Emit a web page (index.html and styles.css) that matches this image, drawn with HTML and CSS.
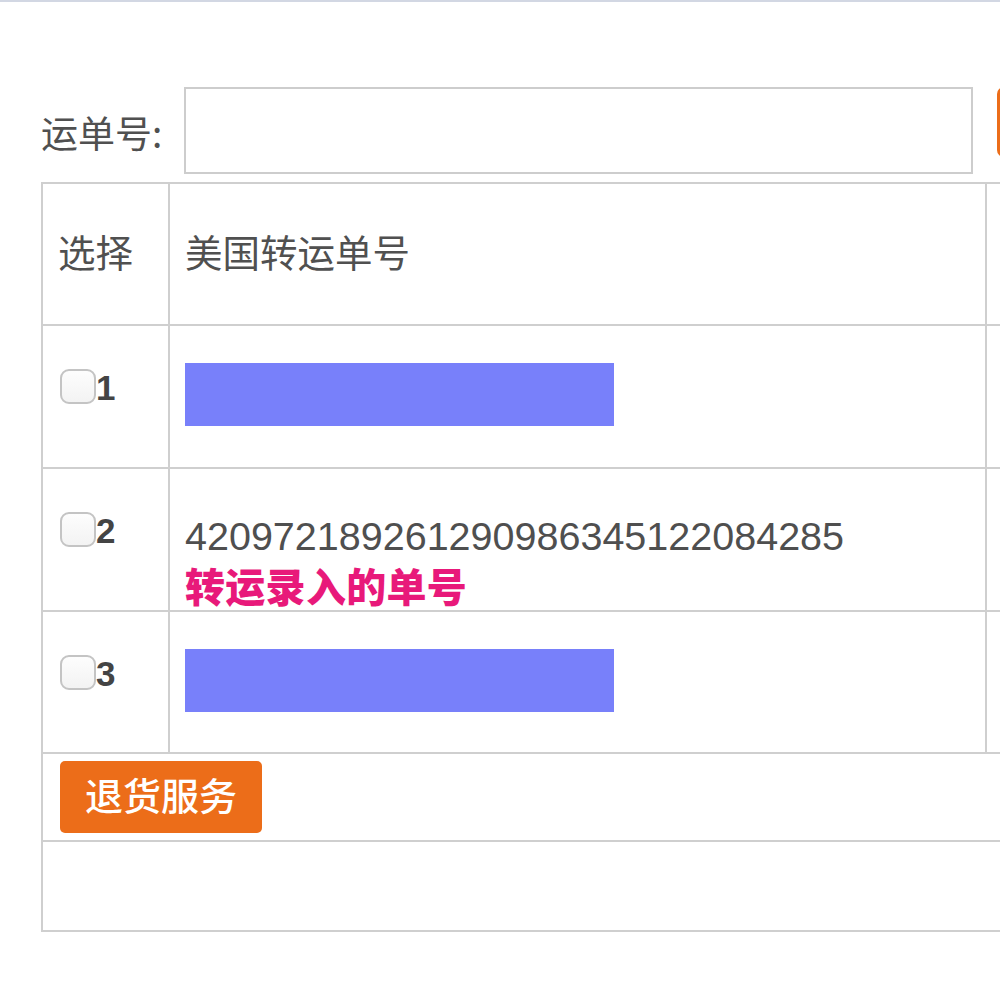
FILE: index.html
```html
<!DOCTYPE html>
<html lang="zh-CN">
<head>
<meta charset="utf-8">
<title>退货服务</title>
<link rel="stylesheet" href="styles.css">
</head>
<body>
<div class="page">
  <form class="search">
    <label class="search-label">运单号:</label>
    <input class="search-input" type="text">
    <button class="search-btn" type="button"></button>
  </form>
  <table class="grid">
    <colgroup>
      <col class="c-sel">
      <col class="c-no">
      <col class="c-extra">
    </colgroup>
    <tr class="head">
      <th>选择</th>
      <th>美国转运单号</th>
      <th></th>
    </tr>
    <tr class="row">
      <td class="sel"><span class="cb"></span><span class="idx">1</span></td>
      <td class="no"><div class="mask"></div></td>
      <td></td>
    </tr>
    <tr class="row">
      <td class="sel"><span class="cb"></span><span class="idx">2</span></td>
      <td class="no"><div class="num">420972189261290986345122084285</div><div class="note">转运录入的单号</div></td>
      <td></td>
    </tr>
    <tr class="row">
      <td class="sel"><span class="cb"></span><span class="idx">3</span></td>
      <td class="no"><div class="mask"></div></td>
      <td></td>
    </tr>
    <tr class="actions">
      <td colspan="3"><button class="return-btn" type="button">退货服务</button></td>
    </tr>
    <tr class="empty">
      <td colspan="3"></td>
    </tr>
  </table>
</div>
</body>
</html>
```
FILE: styles.css
```css
html, body {
  margin: 0;
  padding: 0;
}
body {
  width: 1000px;
  height: 1000px;
  overflow: hidden;
  background: #fff;
  border-top: 2px solid #d2d7e3;
  box-sizing: border-box;
  font-family: "Liberation Sans", "Noto Sans CJK SC", sans-serif;
  color: #505050;
}
.page {
  padding: 85px 0 0 41px;
}
.search {
  display: flex;
  align-items: center;
  margin: 0;
  width: 1200px;
}
.search-label {
  font-family: "Noto Sans CJK SC", sans-serif;
  font-size: 37px;
  width: 143px;
  flex: none;
  color: #505050;
  position: relative;
  top: 1px;
}
.search-input {
  flex: none;
  width: 789px;
  height: 87px;
  box-sizing: border-box;
  border: 2px solid #cdcdcd;
  margin: 0;
  padding: 0 10px;
  outline: none;
  background: #fff;
}
.search-btn {
  flex: none;
  align-self: flex-start;
  margin-left: 24px;
  width: 130px;
  height: 70px;
  border: none;
  border-radius: 7px;
  background: #ec6d19;
}
.grid {
  margin-top: 8px;
  border-collapse: collapse;
  table-layout: fixed;
  width: 1100px;
}
.c-sel { width: 127px; }
.c-no { width: 817px; }
.c-extra { width: 156px; }
.grid th, .grid td {
  border: 2px solid #cfcfcf;
  padding: 0 0 0 15px;
  text-align: left;
  vertical-align: top;
}
.head th {
  height: 142px;
  vertical-align: middle;
  padding-bottom: 8px;
  box-sizing: border-box;
  font-family: "Noto Sans CJK SC", sans-serif;
  font-weight: normal;
  font-size: 37.5px;
  color: #505050;
}
.row td {
  height: 142.5px;
  box-sizing: border-box;
}
.row .sel {
  padding-top: 43px;
  padding-left: 17px;
}
.cb {
  display: inline-block;
  vertical-align: top;
  width: 36px;
  height: 35px;
  box-sizing: border-box;
  border: 2px solid #c4c4c4;
  border-radius: 9px;
  background: linear-gradient(#fdfdfd, #f3f3f3);
}
.idx {
  display: inline-block;
  vertical-align: top;
  font-size: 35px;
  font-weight: bold;
  line-height: 37px;
  color: #444;
}
.row .no {
  padding-top: 37px;
}
.mask {
  width: 429px;
  height: 63px;
  background: #7880fa;
}
.num {
  font-size: 39.5px;
  line-height: 50px;
  color: #4f4f4f;
  margin-top: 5px;
}
.note {
  font-family: "Noto Sans CJK SC", sans-serif;
  font-size: 40px;
  font-weight: 900;
  line-height: 50px;
  color: #e8197a;
  margin-top: -1px;
  letter-spacing: 0.3px;
}
.actions td {
  height: 88px;
  padding: 7px 0 0 17px;
  box-sizing: border-box;
}
.return-btn {
  display: block;
  width: 202px;
  height: 72px;
  border: none;
  border-radius: 5px;
  background: #ec6d19;
  color: #fff;
  font-family: "Noto Sans CJK SC", sans-serif;
  font-size: 38px;
  font-weight: 500;
  padding: 0 0 8px 0;
  margin: 0;
}
.empty td {
  height: 88px;
}
```
